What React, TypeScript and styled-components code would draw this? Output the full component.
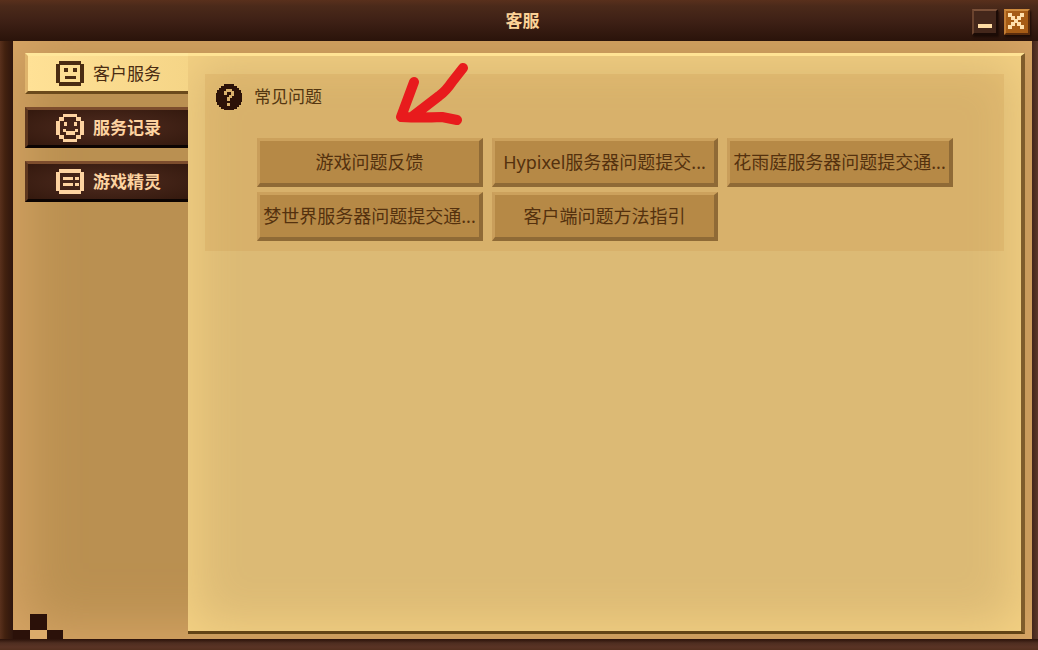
import React from "react";
import styled, { createGlobalStyle, css } from "styled-components";

const GlobalStyle = createGlobalStyle`
  *, *::before, *::after { box-sizing: border-box; }
  body {
    margin: 0;
    font-family: "Noto Sans", "Noto Sans CJK SC", sans-serif;
    background: #3a1d12;
  }
  button { font-family: inherit; margin: 0; padding: 0; cursor: pointer; }
`;

const Window = styled.div`
  min-height: 100vh;
  display: flex;
  flex-direction: column;
  padding: 0 6px 11px 13px;
  background:
    linear-gradient(to bottom, #2a1109 0, #4e2d20 4px, #5a3325 8px, #54301f 11px) bottom / 100% 11px no-repeat,
    linear-gradient(to bottom, #59301c 0, #4b2a1a 6px, #3f2116 20px, #2a130a 41px) top / 100% 41px no-repeat,
    linear-gradient(to right, #59301c 0, #42210f 5px, #2e150d 13px, #43261b calc(100% - 6px), #5c3829 100%);
`;

const TitleBar = styled.header`
  flex: none;
  height: 41px;
  display: grid;
  grid-template-columns: 1fr auto 1fr;
  align-items: center;
`;

const Title = styled.h1`
  grid-column: 2;
  margin: 0;
  font-size: 17px;
  line-height: 24px;
  font-weight: 700;
  color: #fbd297;
`;

const WindowControls = styled.div`
  display: flex;
  justify-content: flex-end;
  gap: 6px;
  padding: 2px 2px 0 0;
`;

const ControlButton = styled.button<{ $close?: boolean }>`
  width: 26px;
  height: 26px;
  display: grid;
  place-items: center;
  border: 2px solid;
  box-shadow: 1px 2px 2px #1b0b06;
  ${({ $close }) =>
    $close
      ? css`
          background: #a65c16;
          border-color: #cf8b3d #5a2c0c #5a2c0c #c27c34;
        `
      : css`
          background: #44271b;
          border-color: #7a5038 #1b0b06 #1b0b06 #6a432e;
        `}
`;

const Body = styled.div`
  position: relative;
  flex: 1;
  display: flex;
  padding: 12px 7px 5px 12px;
  background: #ba9051;
  box-shadow: inset 0 0 60px 4px #dca869;
`;

const CornerMark = styled.svg`
  position: absolute;
  left: 0;
  bottom: 0;
`;

const Sidebar = styled.nav`
  flex: none;
  width: 163px;
  display: flex;
  flex-direction: column;
  gap: 13px;
`;

const Tab = styled.button<{ $active?: boolean }>`
  height: 41px;
  display: grid;
  grid-template-columns: 28px auto;
  justify-content: start;
  align-items: center;
  column-gap: 9px;
  padding-left: 28px;
  border: solid;
  border-width: 3px 0 3px 3px;
  font-size: 17px;
  line-height: 24px;
  ${({ $active }) =>
    $active
      ? css`
          color: #4a2c12;
          font-weight: 400;
          background: linear-gradient(to right, #ffe196, #f5d587);
          border-color: #ffe79b transparent #6b4a1c #dfb46c;
          background-clip: padding-box;
        `
      : css`
          color: #fdd3a0;
          font-weight: 700;
          background: radial-gradient(ellipse at center, #47261a 30%, #34190e 100%);
          background-clip: padding-box;
          border-color: #7d4d2d transparent #0c0402 #5d371f;
        `}
`;

const Panel = styled.main`
  flex: 1;
  min-width: 0;
  padding: 18px 17px;
  border: solid;
  border-width: 3px 4px 3px 0;
  border-color: #ffe394 #7f5c2b #614315 transparent;
  background: #dcba75;
  background-clip: padding-box;
  box-shadow: inset 0 0 50px 4px #f6d384;
`;

const Section = styled.section`
  position: relative;
  padding: 10px 11px;
  background: rgba(200, 143, 70, 0.2);
`;

const SectionHeader = styled.header`
  display: flex;
  align-items: center;
  gap: 12px;
  height: 26px;
`;

const SectionTitle = styled.h2`
  margin: 0;
  font-size: 17px;
  line-height: 24px;
  font-weight: 400;
  color: #543711;
`;

const TopicGrid = styled.div`
  display: grid;
  grid-template-columns: repeat(3, minmax(0, 226px));
  gap: 5px 9px;
  padding: 28px 0 0 41px;
`;

const TopicButton = styled.button`
  height: 49px;
  overflow: hidden;
  white-space: nowrap;
  font-size: 18px;
  line-height: 24px;
  color: #54310e;
  background: #b68946;
  border: solid;
  border-width: 3px 4px 4px 3px;
  border-color: #cca15c #8f6a36 #8f6a36 #c99e5b;
`;

const Arrow = styled.svg`
  position: absolute;
  left: 188px;
  top: -14px;
  pointer-events: none;
`;

type Rect = [number, number, number, number];

const PixelIcon = ({ width, height, rects }: { width: number; height: number; rects: Rect[] }) => (
  <svg width={width} height={height} fill="currentColor" shapeRendering="crispEdges" aria-hidden="true">
    {rects.map(([x, y, w, h], i) => (
      <rect key={i} x={x} y={y} width={w} height={h} />
    ))}
  </svg>
);

const squareFrame: Rect[] = [
  [3, 0, 22, 4], [0, 3, 4, 19], [24, 3, 4, 19], [3, 21, 22, 4],
];

const neutralFace: Rect[] = [...squareFrame, [8, 7, 4, 4], [17, 7, 4, 4], [9, 15, 11, 3]];

const smilingFace: Rect[] = [
  [7, 0, 14, 3], [3, 3, 5, 4], [20, 3, 5, 4], [0, 7, 4, 14], [24, 7, 4, 14],
  [3, 21, 5, 4], [20, 21, 5, 4], [7, 25, 14, 3],
  [8, 8, 3, 4], [18, 8, 3, 4], [7, 15, 3, 3], [10, 17, 9, 4], [19, 15, 3, 3],
];

const listCard: Rect[] = [
  ...squareFrame, [7, 8, 10, 3], [19, 8, 4, 3], [7, 14, 10, 3], [19, 14, 4, 3],
];

const tabs = [
  { label: "客户服务", width: 28, height: 25, rects: neutralFace },
  { label: "服务记录", width: 28, height: 28, rects: smilingFace },
  { label: "游戏精灵", width: 28, height: 25, rects: listCard },
];

const topics = [
  "游戏问题反馈",
  "Hypixel服务器问题提交...",
  "花雨庭服务器问题提交通...",
  "梦世界服务器问题提交通...",
  "客户端问题方法指引",
];

const crossSteps = [0, 1, 2, 3, 4];

export default function App() {
  return (
    <>
      <GlobalStyle />
      <Window>
        <TitleBar>
          <Title>客服</Title>
          <WindowControls>
            <ControlButton aria-label="最小化">
              <svg width="22" height="22" shapeRendering="crispEdges" aria-hidden="true">
                <rect x="4" y="13" width="14" height="4" fill="#ffdca4" />
              </svg>
            </ControlButton>
            <ControlButton $close aria-label="关闭">
              <svg width="22" height="22" shapeRendering="crispEdges" fill="#ffe0ad" aria-hidden="true">
                {crossSteps.map((i) => (
                  <g key={i}>
                    <rect x={2 + i * 3} y={2 + i * 3} width="4" height="4" />
                    <rect x={14 - i * 3} y={2 + i * 3} width="4" height="4" />
                  </g>
                ))}
              </svg>
            </ControlButton>
          </WindowControls>
        </TitleBar>
        <Body>
          <Sidebar>
            {tabs.map(({ label, ...icon }, i) => (
              <Tab key={label} $active={i === 0}>
                <PixelIcon {...icon} />
                <span>{label}</span>
              </Tab>
            ))}
          </Sidebar>
          <Panel>
            <Section>
              <SectionHeader>
                <svg width="26" height="26" shapeRendering="crispEdges" aria-hidden="true">
                  <path
                    fill="#2c1208"
                    d="M8 0h10v2h3v2h2v2h2v3h1v9h-1v3h-2v2h-2v2h-3v1H8v-1H5v-2H3v-2H1v-3H0V9h1V6h2V4h2V2h3z"
                  />
                  <path fill="#d9b16c" d="M10 5h6v2h2v5h-2v2h-2v3h-3v-4h2v-2h2V8h-4v3H8V7h2zM11 19h3v3h-3z" />
                </svg>
                <SectionTitle>常见问题</SectionTitle>
              </SectionHeader>
              <TopicGrid>
                {topics.map((topic) => (
                  <TopicButton key={topic}>{topic}</TopicButton>
                ))}
              </TopicGrid>
              <Arrow
                width="76"
                height="70"
                fill="none"
                stroke="#e81b1d"
                strokeWidth="10"
                strokeLinecap="round"
                strokeLinejoin="round"
                aria-hidden="true"
              >
                <path d="M21 22L8 57Q28 58 49 57L64 60M70 8L59 22Q53 31 46 36L20 56" />
              </Arrow>
            </Section>
          </Panel>
          <CornerMark width="50" height="25" shapeRendering="crispEdges" aria-hidden="true">
            <path fill="#2b1109" d="M17 0h17v16h16v9H34v-9H17v9H0v-9h17z" />
            <rect x="17" y="16" width="17" height="9" fill="#dcab6b" />
          </CornerMark>
        </Body>
      </Window>
    </>
  );
}
